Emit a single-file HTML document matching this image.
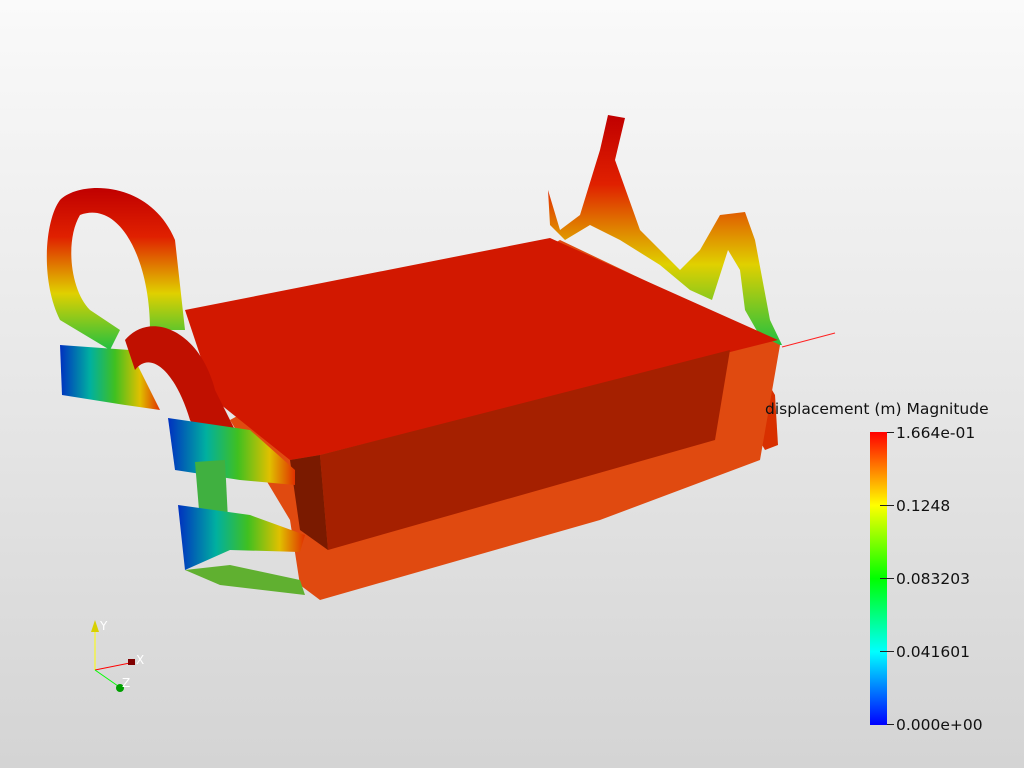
<!DOCTYPE html>
<html><head><meta charset="utf-8"><style>
html,body{margin:0;padding:0;width:1024px;height:768px;overflow:hidden;background:linear-gradient(#fafafa,#d4d4d4);font-family:"DejaVu Sans","Liberation Sans",sans-serif;}
svg{position:absolute;left:0;top:0}
</style></head><body>
<svg width="1024" height="768" viewBox="0 0 1024 768">
<defs>
<linearGradient id="cb" x1="0" y1="1" x2="0" y2="0">
<stop offset="0" stop-color="#0000ff"/><stop offset="0.25" stop-color="#00ffff"/><stop offset="0.5" stop-color="#00ff00"/><stop offset="0.75" stop-color="#ffff00"/><stop offset="1" stop-color="#ff0000"/>
</linearGradient>
<linearGradient id="hl" x1="0" y1="0" x2="1" y2="0">
<stop offset="0" stop-color="#0030c0"/><stop offset="0.3" stop-color="#00b0a0"/><stop offset="0.55" stop-color="#40c020"/><stop offset="0.8" stop-color="#e0c000"/><stop offset="1" stop-color="#e03000"/>
</linearGradient>
<linearGradient id="loop" x1="0" y1="1" x2="0" y2="0">
<stop offset="0" stop-color="#20c040"/><stop offset="0.35" stop-color="#e0d000"/><stop offset="0.7" stop-color="#e02000"/><stop offset="1" stop-color="#c00000"/>
</linearGradient>
</defs>
<path d="M548 190 L560 230 L580 215 L600 150 L608 115 L625 118 L615 160 L640 230 L680 270 L700 250 L720 215 L745 212 L755 240 L770 320 L782 345 L765 345 L745 310 L740 270 L728 250 L712 300 L690 290 L660 265 L620 240 L590 225 L565 240 L550 225 Z" fill="url(#loop)"/>
<path d="M745 380 L760 370 L775 395 L778 445 L765 450 L748 420 Z" fill="#d83000"/>
<!-- tray -->
<path d="M230 420 L560 240 L780 345 L760 460 L600 520 L320 600 L300 585 L290 520 Z" fill="#e04a10"/>
<!-- top face -->
<path d="M185 310 L550 238 L778 340 L320 455 L290 460 L215 400 Z" fill="#d21800"/>
<!-- front face -->
<path d="M320 455 L730 350 L715 440 L328 550 Z" fill="#a52000"/>
<path d="M290 460 L320 455 L328 550 L300 530 Z" fill="#7a1a00"/>
<!-- left loops -->
<path d="M60 200 C80 180 150 180 175 240 L185 330 L150 330 C150 260 120 200 80 215 C65 240 70 290 90 310 L120 330 L110 350 L60 320 C40 280 45 220 60 200 Z" fill="url(#loop)"/>
<path d="M60 345 L130 350 L160 410 L125 405 L62 395 Z" fill="url(#hl)"/>
<path d="M125 340 C150 310 200 330 215 390 L240 440 L215 460 L190 420 C175 370 150 350 135 370 Z" fill="#c01000"/>
<path d="M168 418 L250 430 L295 470 L295 485 L240 480 L175 470 Z" fill="url(#hl)"/>
<path d="M195 462 L225 460 L228 520 L200 522 Z" fill="#40b040"/>
<path d="M178 505 L250 515 L305 535 L300 552 L230 550 L185 570 Z" fill="url(#hl)"/>
<path d="M185 570 L220 585 L305 595 L300 580 L230 565 Z" fill="#60b030"/>
<line x1="782" y1="347" x2="835" y2="333" stroke="#ff2020" stroke-width="1"/>
<line x1="95" y1="632" x2="95" y2="670" stroke="#ffff00" stroke-width="1"/>
<polygon points="91,632 95,620 99,632" fill="#d8d000"/>
<line x1="95" y1="670" x2="130" y2="663" stroke="#ff0000" stroke-width="1"/>
<rect x="128" y="659" width="7" height="6" fill="#800000"/>
<line x1="95" y1="670" x2="118" y2="686" stroke="#00ff00" stroke-width="1"/>
<circle cx="120" cy="688" r="4" fill="#00a000"/>
<text x="100" y="630" font-size="12" fill="#fff">Y</text>
<text x="136" y="664" font-size="12" fill="#fff">X</text>
<text x="122" y="687" font-size="12" fill="#fff">Z</text>
<rect x="870" y="432" width="17" height="293" fill="url(#cb)"/>
<g stroke="#222" stroke-width="1">
<line x1="887" y1="432.5" x2="894" y2="432.5"/><line x1="880" y1="505.5" x2="894" y2="505.5"/><line x1="880" y1="578.5" x2="894" y2="578.5"/><line x1="880" y1="651.5" x2="894" y2="651.5"/><line x1="887" y1="724.5" x2="894" y2="724.5"/>
</g>
<g font-size="15.5" fill="#111">
<text x="765" y="414">displacement (m) Magnitude</text>
<text x="896" y="438">1.664e-01</text>
<text x="896" y="511">0.1248</text>
<text x="896" y="584">0.083203</text>
<text x="896" y="657">0.041601</text>
<text x="896" y="730">0.000e+00</text>
</g>
</svg>
</body></html>
